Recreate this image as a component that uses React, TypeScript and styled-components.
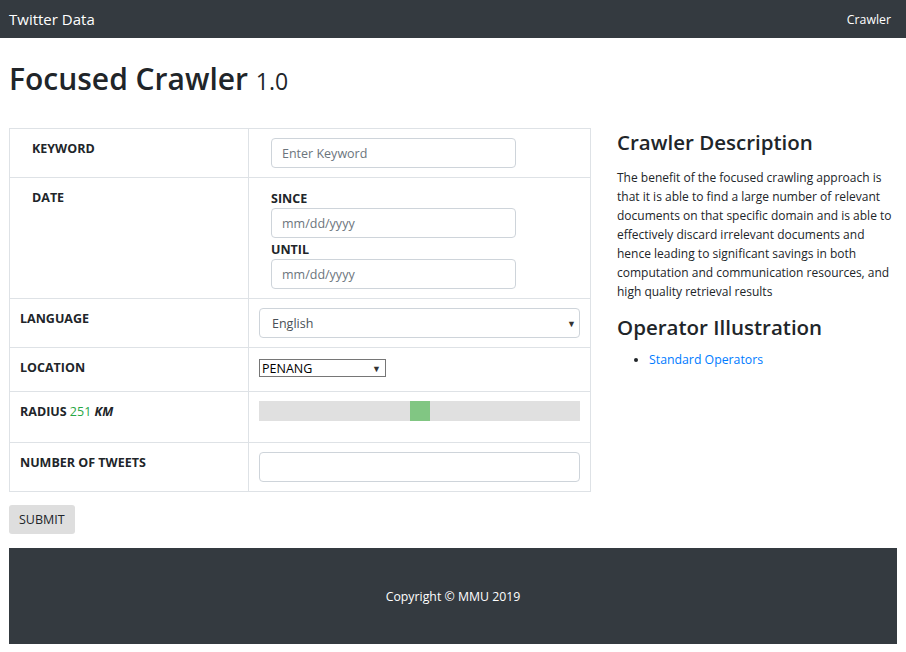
import React from "react";
import styled, { createGlobalStyle } from "styled-components";

const Global = createGlobalStyle`
  html, body { margin: 0; padding: 0; background: #fff; }
  body {
    font-family: "Open Sans", "Noto Sans", sans-serif;
    font-size: 13px;
    color: #212529;
  }
  * { box-sizing: border-box; }
`;

const NavBar = styled.nav`
  height: 38px;
  background: #343a40;
  display: flex;
  align-items: center;
  justify-content: space-between;
  padding: 0 15px 0 9px;
`;

const Brand = styled.a`
  color: #fff;
  font-size: 15px;
  text-decoration: none;
`;

const NavLink = styled.a`
  color: #fff;
  font-size: 12.3px;
  text-decoration: none;
`;

const Page = styled.main`
  padding: 0 9px 8px;
`;

const Title = styled.h1`
  margin: 23px 0 31px;
  font-size: 30px;
  font-weight: 600;
  line-height: 1.2;
  color: #212529;
`;

const Version = styled.small`
  font-size: 23px;
  font-weight: 400;
`;

const Columns = styled.div`
  display: grid;
  grid-template-columns: 582px 1fr;
  column-gap: 26px;
`;

const FormTable = styled.table`
  width: 582px;
  border-collapse: collapse;
  table-layout: fixed;
`;

const Row = styled.tr``;

const LabelCell = styled.td<{ $inset?: boolean }>`
  width: 239px;
  border: 1px solid #dee2e6;
  padding: 10px 12px 13px ${(p) => (p.$inset ? "22px" : "10px")};
  vertical-align: top;
  font-weight: 700;
  font-size: 12.5px;
  line-height: 20px;
`;

const FieldCell = styled.td<{ $inset?: boolean }>`
  border: 1px solid #dee2e6;
  padding: 9px 10px 9px ${(p) => (p.$inset ? "22px" : "10px")};
  vertical-align: top;
`;

const Green = styled.span`
  color: #28a745;
  font-weight: 400;
`;

const Italic = styled.i`
  font-style: italic;
`;

const SubLabel = styled.div`
  font-weight: 700;
  font-size: 12.5px;
  line-height: 19px;
  margin-top: 2px;
`;

const TextInput = styled.input<{ $full?: boolean }>`
  display: block;
  width: ${(p) => (p.$full ? "100%" : "245px")};
  height: 30px;
  border: 1px solid #ced4da;
  border-radius: 4px;
  padding: 0 10px;
  font-family: inherit;
  font-size: 12.5px;
  color: #495057;
  background: #fff;
  &::placeholder { color: #6c757d; }
`;

const FancySelect = styled.div`
  display: flex;
  align-items: center;
  justify-content: space-between;
  height: 30px;
  border: 1px solid #ced4da;
  border-radius: 4px;
  padding: 0 3px 0 12px;
  color: #495057;
  font-size: 12.5px;
`;

const Arrow = styled.span`
  font-size: 9px;
  color: #333;
`;

const PlainSelect = styled.div`
  display: flex;
  align-items: center;
  justify-content: space-between;
  width: 127px;
  height: 18px;
  margin-top: 2px;
  border: 1px solid #767676;
  padding: 0 4px 0 2px;
  color: #000;
  font-size: 12.5px;
`;

const Slider = styled.input`
  -webkit-appearance: none;
  appearance: none;
  display: block;
  width: 100%;
  height: 20px;
  margin: 0 0 12px;
  background: #d3d3d3;
  opacity: 0.7;
  outline: none;
  &::-webkit-slider-thumb {
    -webkit-appearance: none;
    appearance: none;
    width: 20px;
    height: 20px;
    background: #4caf50;
    border: none;
    border-radius: 0;
  }
`;

const SubmitButton = styled.button`
  display: block;
  margin-top: 13px;
  height: 29px;
  padding: 0 10px;
  border: none;
  border-radius: 3px;
  background: #dedede;
  color: #212529;
  font-family: inherit;
  font-size: 12.5px;
`;

const Side = styled.aside`
  padding-top: 0;
`;

const SideHeading = styled.h3<{ $top: number; $bottom: number }>`
  margin: ${(p) => p.$top}px 0 ${(p) => p.$bottom}px;
  font-size: 20.5px;
  font-weight: 600;
  line-height: 1.2;
`;

const Paragraph = styled.p`
  margin: 0;
  font-size: 12px;
  line-height: 19px;
`;

const List = styled.ul`
  margin: 0;
  padding-left: 32px;
  font-size: 12.3px;
  line-height: 19px;
`;

const Link = styled.a`
  color: #007bff;
  text-decoration: none;
`;

const Footer = styled.footer`
  margin-top: 14px;
  height: 96px;
  background: #343a40;
  color: #fff;
  display: flex;
  align-items: center;
  justify-content: center;
  font-size: 12.3px;
`;

export default function App() {
  return (
    <>
      <Global />
      <NavBar>
        <Brand href="#">Twitter Data</Brand>
        <NavLink href="#">Crawler</NavLink>
      </NavBar>
      <Page>
        <Title>
          Focused Crawler <Version>1.0</Version>
        </Title>
        <Columns>
          <div>
            <FormTable>
              <tbody>
                <Row>
                  <LabelCell $inset>KEYWORD</LabelCell>
                  <FieldCell $inset>
                    <TextInput placeholder="Enter Keyword" />
                  </FieldCell>
                </Row>
                <Row>
                  <LabelCell $inset>DATE</LabelCell>
                  <FieldCell $inset>
                    <SubLabel>SINCE</SubLabel>
                    <TextInput placeholder="mm/dd/yyyy" />
                    <SubLabel>UNTIL</SubLabel>
                    <TextInput placeholder="mm/dd/yyyy" />
                  </FieldCell>
                </Row>
                <Row>
                  <LabelCell>LANGUAGE</LabelCell>
                  <FieldCell>
                    <FancySelect>
                      <span>English</span>
                      <Arrow>▼</Arrow>
                    </FancySelect>
                  </FieldCell>
                </Row>
                <Row>
                  <LabelCell>LOCATION</LabelCell>
                  <FieldCell>
                    <PlainSelect>
                      <span>PENANG</span>
                      <Arrow>▼</Arrow>
                    </PlainSelect>
                  </FieldCell>
                </Row>
                <Row>
                  <LabelCell>
                    RADIUS <Green>251</Green> <Italic>KM</Italic>
                  </LabelCell>
                  <FieldCell>
                    <Slider type="range" min={1} max={500} defaultValue={251} />
                  </FieldCell>
                </Row>
                <Row>
                  <LabelCell>NUMBER OF TWEETS</LabelCell>
                  <FieldCell>
                    <TextInput $full />
                  </FieldCell>
                </Row>
              </tbody>
            </FormTable>
            <SubmitButton>SUBMIT</SubmitButton>
          </div>
          <Side>
            <SideHeading $top={2} $bottom={13}>Crawler Description</SideHeading>
            <Paragraph>
              The benefit of the focused crawling approach is that it is able to find a large
              number of relevant documents on that specific domain and is able to effectively
              discard irrelevant documents and hence leading to significant savings in both
              computation and communication resources, and high quality retrieval results
            </Paragraph>
            <SideHeading $top={14} $bottom={11}>Operator Illustration</SideHeading>
            <List>
              <li>
                <Link href="#">Standard Operators</Link>
              </li>
            </List>
          </Side>
        </Columns>
        <Footer>Copyright © MMU 2019</Footer>
      </Page>
    </>
  );
}
